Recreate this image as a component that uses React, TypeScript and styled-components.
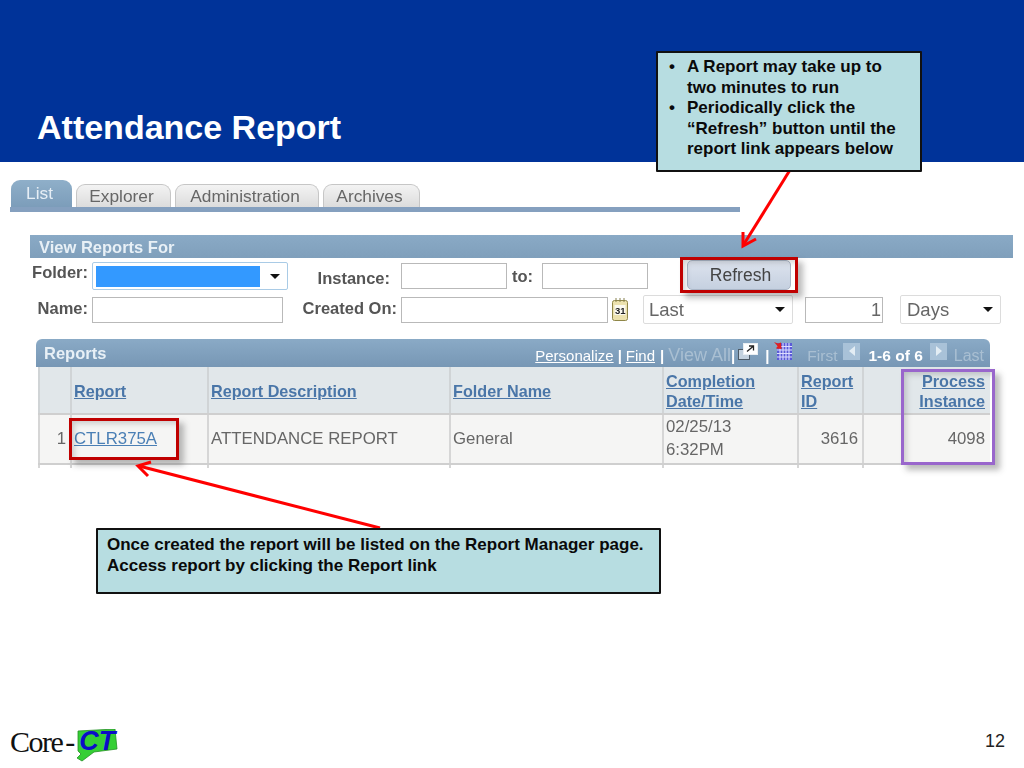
import React from "react";
import styled, { createGlobalStyle } from "styled-components";

const GlobalStyle = createGlobalStyle`
  html, body {
    margin: 0;
    padding: 0;
    background: #fff;
    font-family: "Liberation Sans", Arial, sans-serif;
  }
`;

const Slide = styled.div`
  position: relative;
  width: 1024px;
  height: 768px;
  overflow: hidden;
  background: #fff;
`;

const Banner = styled.header`
  height: 162px;
  box-sizing: border-box;
  background: #003399;
  padding: 107px 0 0 37px;
`;

const Title = styled.h1`
  margin: 0;
  font-size: 34px;
  line-height: 40px;
  font-weight: bold;
  color: #fff;
`;

const Capture = styled.section`
  padding: 18px 0 0 10px;
  width: 1003px;
  filter: blur(0.45px);
  color: #555;
  font-size: 17px;
`;

const TabRow = styled.nav`
  display: flex;
  align-items: flex-end;
  gap: 4px;
  width: 730px;
  height: 32px;
  box-sizing: border-box;
  border-bottom: 5px solid #85a0bf;
`;

const Tab = styled.div<{ $active?: boolean; $w: number }>`
  width: ${(p) => p.$w}px;
  height: ${(p) => (p.$active ? 27 : 23)}px;
  box-sizing: border-box;
  margin-left: ${(p) => (p.$active ? 1 : 0)}px;
  padding-right: 4px;
  border-radius: 9px 9px 0 0;
  text-align: center;
  line-height: ${(p) => (p.$active ? 27 : 22)}px;
  font-size: 17.3px;
  color: ${(p) => (p.$active ? "#e6eef5" : "#666")};
  background: ${(p) =>
    p.$active
      ? "linear-gradient(#8fafc9, #7c9dba)"
      : "linear-gradient(#f3f3f3, #dcdcdc)"};
  border: ${(p) => (p.$active ? "none" : "1px solid #c6c6c6")};
  border-bottom: none;
`;

const BarHeading = styled.div`
  margin: 23px 0 0 20px;
  height: 23px;
  line-height: 24px;
  padding-left: 9px;
  background: linear-gradient(#8aaac6, #7f9fbb);
  color: #e8f0f6;
  font-weight: bold;
  font-size: 16.5px;
`;

const FormRow = styled.div<{ $top: number; $h: number }>`
  display: flex;
  align-items: center;
  margin-top: ${(p) => p.$top}px;
  height: ${(p) => p.$h}px;
  padding-left: 20px;
`;

const Label = styled.label<{ $w: number; $dy?: number }>`
  width: ${(p) => p.$w}px;
  position: relative;
  top: ${(p) => p.$dy ?? 0}px;
  flex: none;
  text-align: right;
  font-weight: bold;
  font-size: 16.5px;
  color: #555;
  white-space: nowrap;
`;

const Field = styled.div<{ $w: number; $ml: number; $right?: boolean }>`
  width: ${(p) => p.$w}px;
  height: 26px;
  margin-left: ${(p) => p.$ml}px;
  flex: none;
  box-sizing: border-box;
  border: 1px solid #b9b9b9;
  background: #fff;
  padding: 0 1px;
  line-height: 24px;
  font-size: 18px;
  text-align: ${(p) => (p.$right ? "right" : "left")};
  color: #666;
`;

const Dropdown = styled.div<{ $w: number; $h: number; $ml: number; $pad: number; $focus?: boolean }>`
  display: flex;
  align-items: center;
  justify-content: space-between;
  width: ${(p) => p.$w}px;
  height: ${(p) => p.$h}px;
  margin-left: ${(p) => p.$ml}px;
  flex: none;
  box-sizing: border-box;
  padding: 3px 7px 3px ${(p) => p.$pad}px;
  border: 1px solid ${(p) => (p.$focus ? "#a9cbe6" : "#dcdcdc")};
  border-radius: 2px;
  background: #fff;
  font-size: 18.5px;
  color: #666;
`;

const Selected = styled.div`
  width: 164px;
  height: 21px;
  background: #3399ff;
`;

const Caret = styled.span`
  width: 0;
  height: 0;
  border-left: 5px solid transparent;
  border-right: 5px solid transparent;
  border-top: 5px solid #111;
`;

const RefreshButton = styled.button`
  width: 104px;
  height: 30px;
  margin-left: 39px;
  margin-top: -3px;
  flex: none;
  padding: 2px 0 0 3px;
  border: 1px solid #a9b5c6;
  border-radius: 5px;
  background: linear-gradient(#dde3ee, #c5d0e0);
  font-family: inherit;
  font-size: 17.5px;
  color: #444;
`;

const ReportsPanel = styled.div`
  margin: 15px 0 0 26px;
  width: 954px;
  height: 129px;
  overflow: hidden;
`;

const ReportsBar = styled.div`
  display: flex;
  align-items: center;
  height: 28px;
  padding: 0 6px 0 8px;
  border-radius: 6px 6px 0 0;
  background: linear-gradient(#8aaac6, #7797b5);
  color: #e8f0f6;
  font-size: 16.5px;
`;

const ReportsTitle = styled.span`
  flex: 1;
  font-weight: bold;
`;

const Pager = styled.div`
  display: flex;
  align-items: center;
  padding-top: 5px;
  font-size: 15px;
  color: #a9bfd2;
  white-space: nowrap;
`;

const PagerLink = styled.a`
  color: #fff;
  text-decoration: underline;
`;

const PagerDivider = styled.span<{ $l: number; $r: number }>`
  margin: 0 ${(p) => p.$r}px 0 ${(p) => p.$l}px;
  color: #fff;
  font-weight: bold;
`;

const PagerMuted = styled.span<{ $size: number; $ml?: number }>`
  margin-left: ${(p) => p.$ml ?? 0}px;
  font-size: ${(p) => p.$size}px;
`;

const PagerCount = styled.b`
  margin: 0 7px 0 8px;
  font-size: 15.5px;
  color: #fff;
`;

const ReportsTable = styled.table`
  width: 952px;
  margin-left: 2px;
  table-layout: fixed;
  border-collapse: collapse;
`;

const HeadCell = styled.th<{ $right?: boolean; $w: number }>`
  width: ${(p) => p.$w}px;
  height: 47px;
  box-sizing: border-box;
  padding: 2px 4px 0 2px;
  background: #e1e7ea;
  border-left: 2px solid #d0d4d6;
  border-bottom: 2px solid #cfcfcf;
  text-align: ${(p) => (p.$right ? "right" : "left")};
  font-size: 16.2px;
  line-height: 20px;
  font-weight: bold;
  &:last-child {
    padding-right: 6px;
  }
`;

const HeadLink = styled.a`
  color: #4a76a8;
  text-decoration: underline;
`;

const BodyCell = styled.td<{ $right?: boolean }>`
  height: 50px;
  box-sizing: border-box;
  padding: 0 4px 2px 2px;
  background: #f5f5f4;
  border-left: 2px solid #d6d6d6;
  border-bottom: 2px solid #cfcfcf;
  text-align: ${(p) => (p.$right ? "right" : "left")};
  font-size: 16.8px;
  line-height: 23px;
  color: #666;
  &:last-child {
    padding-right: 6px;
  }
`;

const RunLink = styled.a`
  color: #4a7fb5;
  text-decoration: underline;
`;

const Tail = styled.td`
  height: 4px;
  padding: 0;
  background: #fff;
  border-left: 2px solid #d6d6d6;
`;

const Callout = styled.aside<{ $x: number; $y: number; $w: number; $h: number }>`
  position: absolute;
  left: ${(p) => p.$x}px;
  top: ${(p) => p.$y}px;
  width: ${(p) => p.$w}px;
  height: ${(p) => p.$h}px;
  box-sizing: border-box;
  background: #b7dde1;
  border: 2px solid #111;
  border-radius: 1px;
  color: #0a0a0a;
  font-weight: bold;
  font-size: 17px;
  line-height: 20.5px;
`;

const TipList = styled.ul`
  margin: 4px 0 0;
  padding: 0 20px 0 29px;
  list-style: none;
`;

const Tip = styled.li`
  position: relative;
  &::before {
    content: "•";
    position: absolute;
    left: -18px;
  }
`;

const Note = styled.p`
  margin: 5px 0 0 9px;
`;

const Highlight = styled.div<{ $x: number; $y: number; $w: number; $h: number; $c: string }>`
  position: absolute;
  left: ${(p) => p.$x}px;
  top: ${(p) => p.$y}px;
  width: ${(p) => p.$w}px;
  height: ${(p) => p.$h}px;
  box-sizing: border-box;
  border: 3px solid ${(p) => p.$c};
  box-shadow: 5px 5px 6px rgba(60, 60, 60, 0.35),
    inset 5px 5px 6px -3px rgba(60, 60, 60, 0.25);
`;

const ArrowLayer = styled.svg`
  position: absolute;
  left: 0;
  top: 0;
  pointer-events: none;
`;

const Logo = styled.div`
  position: absolute;
  left: 10px;
  top: 724px;
  display: flex;
  align-items: flex-start;
  font-family: "Liberation Serif", serif;
  font-size: 30px;
  line-height: 36px;
  color: #111;
`;

const LogoWord = styled.span`
  letter-spacing: -1.5px;
`;

const LogoDash = styled.span`
  margin-left: 3px;
`;

const LogoBadge = styled.div`
  position: relative;
  width: 46px;
  height: 34px;
  margin: 5px 0 0 -1px;
`;

const LogoInitials = styled.span`
  position: absolute;
  left: 5px;
  top: -2px;
  font-family: "Liberation Sans", sans-serif;
  font-size: 27px;
  line-height: 28px;
  font-weight: bold;
  font-style: italic;
  color: #0c0cc8;
`;

const PageNumber = styled.div`
  position: absolute;
  right: 19px;
  top: 731px;
  font-size: 18px;
  color: #222;
`;

const Tiny = styled.svg<{ $ml?: number; $mr?: number; $mt?: number }>`
  flex: none;
  margin-left: ${(p) => p.$ml ?? 0}px;
  margin-right: ${(p) => p.$mr ?? 0}px;
  margin-top: ${(p) => p.$mt ?? 0}px;
`;

const Calendar = () => (
  <Tiny width="18" height="26" viewBox="0 0 18 26" $ml={3}>
    <rect x="1.500" y="3.500" width="15" height="20" rx="2" fill="#ece2ae" stroke="#8f8648" />
    <path d="M5 1v4M9 1v4M13 1v4" stroke="#86804e" />
    <rect x="3.500" y="8" width="11" height="10" fill="#fbfaf0" />
    <text x="4" y="17" fontSize="9.500" fontWeight="bold" fill="#222" fontFamily="Liberation Sans">31</text>
  </Tiny>
);

const NewWindow = () => (
  <Tiny width="20" height="17" viewBox="0 0 20 17" $ml={3} $mt={-8}>
    <rect x="0.500" y="6.500" width="11" height="10" fill="#c3d1de" stroke="#4d5a66" />
    <rect x="5.500" y="0.500" width="14" height="11" fill="#fff" stroke="#e9eef2" />
    <path d="M9 8.500l6-5M11 3h4.500v4.500" stroke="#222" strokeWidth="1.300" fill="none" />
  </Tiny>
);

const GridIcon = () => (
  <Tiny width="19" height="19" viewBox="0 0 19 19" $mt={-9}>
    <rect x="3" y="1" width="15" height="17" fill="#5a5ad8" />
    <path d="M3 4.500h15M3 8h15M3 11.500h15M3 15h15M6 1v17M9 1v17M12 1v17M15 1v17" stroke="#dcdcff" strokeWidth="1.100" />
    <path d="M0 0l4 1.500L7 0.500 7.500 7 2 6.500 3.500 4z" fill="#e02020" />
  </Tiny>
);

const PageStep = ({ back }: { back?: boolean }) => (
  <Tiny width="17" height="17" viewBox="0 0 17 17" $ml={back ? 6 : 0} $mr={back ? 0 : 7} $mt={-9}>
    <rect width="17" height="17" fill="#a9c2d8" />
    <path d={back ? "M12 3v10l-6-5z" : "M6 3v10l6-5z"} fill="#e3edf4" />
  </Tiny>
);

const columns = [
  { key: "index", label: "", w: 32 },
  { key: "report", label: "Report", w: 137 },
  { key: "desc", label: "Report Description", w: 242 },
  { key: "folder", label: "Folder Name", w: 213 },
  { key: "done", label: "Completion Date/Time", w: 135 },
  { key: "id", label: "Report ID", w: 65 },
  { key: "instance", label: "Process Instance", w: 128, right: true },
];

const App = () => {
  return (
    <Slide>
      <GlobalStyle />
      <Banner>
        <Title>Attendance Report</Title>
      </Banner>

      <Capture>
        <TabRow>
          <Tab $active $w={61}>List</Tab>
          <Tab $w={95}>Explorer</Tab>
          <Tab $w={144}>Administration</Tab>
          <Tab $w={97}>Archives</Tab>
        </TabRow>

        <BarHeading>View Reports For</BarHeading>

        <FormRow $top={4} $h={28}>
          <Label $w={58} $dy={-4}>Folder:</Label>
          <Dropdown $w={196} $h={28} $ml={4} $pad={3} $focus>
            <Selected />
            <Caret />
          </Dropdown>
          <Label $w={102} $dy={2}>Instance:</Label>
          <Field $w={106} $ml={11}></Field>
          <Label $w={26}>to:</Label>
          <Field $w={106} $ml={9}></Field>
          <RefreshButton>Refresh</RefreshButton>
        </FormRow>

        <FormRow $top={5} $h={29}>
          <Label $w={58} $dy={-1}>Name:</Label>
          <Field $w={191} $ml={4}></Field>
          <Label $w={114} $dy={-1}>Created On:</Label>
          <Field $w={207} $ml={4}></Field>
          <Calendar />
          <Dropdown $w={150} $h={29} $ml={14} $pad={5}>
            Last
            <Caret />
          </Dropdown>
          <Field $w={78} $ml={12} $right>1</Field>
          <Dropdown $w={101} $h={29} $ml={17} $pad={6}>
            Days
            <Caret />
          </Dropdown>
        </FormRow>

        <ReportsPanel>
          <ReportsBar>
            <ReportsTitle>Reports</ReportsTitle>
            <Pager>
              <PagerLink>Personalize</PagerLink>
              <PagerDivider $l={4} $r={4}>|</PagerDivider>
              <PagerLink>Find</PagerLink>
              <PagerDivider $l={5} $r={4}>|</PagerDivider>
              <PagerMuted $size={18}>View All</PagerMuted>
              <PagerDivider $l={0} $r={0}>|</PagerDivider>
              <NewWindow />
              <PagerDivider $l={7} $r={5}>|</PagerDivider>
              <GridIcon />
              <PagerMuted $size={15.500} $ml={14}>First</PagerMuted>
              <PageStep back />
              <PagerCount>1-6 of 6</PagerCount>
              <PageStep />
              <PagerMuted $size={16}>Last</PagerMuted>
            </Pager>
          </ReportsBar>
          <ReportsTable>
            <thead>
              <tr>
                {columns.map((c) => (
                  <HeadCell key={c.key} $w={c.w} $right={c.right}>
                    {c.label && <HeadLink>{c.label}</HeadLink>}
                  </HeadCell>
                ))}
              </tr>
            </thead>
            <tbody>
              <tr>
                <BodyCell $right>1</BodyCell>
                <BodyCell><RunLink>CTLR375A</RunLink></BodyCell>
                <BodyCell>ATTENDANCE REPORT</BodyCell>
                <BodyCell>General</BodyCell>
                <BodyCell>02/25/13<br />6:32PM</BodyCell>
                <BodyCell $right>3616</BodyCell>
                <BodyCell $right>4098</BodyCell>
              </tr>
              <tr>
                {columns.map((c) => (
                  <Tail key={c.key} />
                ))}
              </tr>
            </tbody>
          </ReportsTable>
        </ReportsPanel>
      </Capture>

      <Highlight $x={680} $y={257} $w={118} $h={36} $c="#c00000" />
      <Highlight $x={69} $y={418} $w={110} $h={42} $c="#c00000" />
      <Highlight $x={901} $y={369} $w={94} $h={96} $c="#9966cc" />

      <ArrowLayer width="1024" height="768" viewBox="0 0 1024 768">
        <g stroke="#ff0000" strokeWidth="3" fill="none">
          <path d="M790 170L744 244" />
          <path d="M743 232L743 246L756 239" />
          <path d="M380 528L139 466" />
          <path d="M151 462L138 466L148 476" />
        </g>
      </ArrowLayer>

      <Callout $x={656} $y={51} $w={266} $h={121}>
        <TipList>
          <Tip>A Report may take up to two minutes to run</Tip>
          <Tip>
            Periodically click the “Refresh” button until the report link appears below
          </Tip>
        </TipList>
      </Callout>

      <Callout $x={96} $y={528} $w={565} $h={66}>
        <Note>
          Once created the report will be listed on the Report Manager page.
          <br />
          Access report by clicking the Report link
        </Note>
      </Callout>

      <Logo>
        <LogoWord>Core</LogoWord>
        <LogoDash>-</LogoDash>
        <LogoBadge>
          <svg width="46" height="34" viewBox="0 0 46 34">
            <path d="M4 2L41 0L43 20L20 23L8 32L3 29L7 25L4 22z" fill="#35cf35" stroke="#249024" strokeWidth="0.800" />
          </svg>
          <LogoInitials>CT</LogoInitials>
        </LogoBadge>
      </Logo>

      <PageNumber>12</PageNumber>
    </Slide>
  );
};

export default App;
